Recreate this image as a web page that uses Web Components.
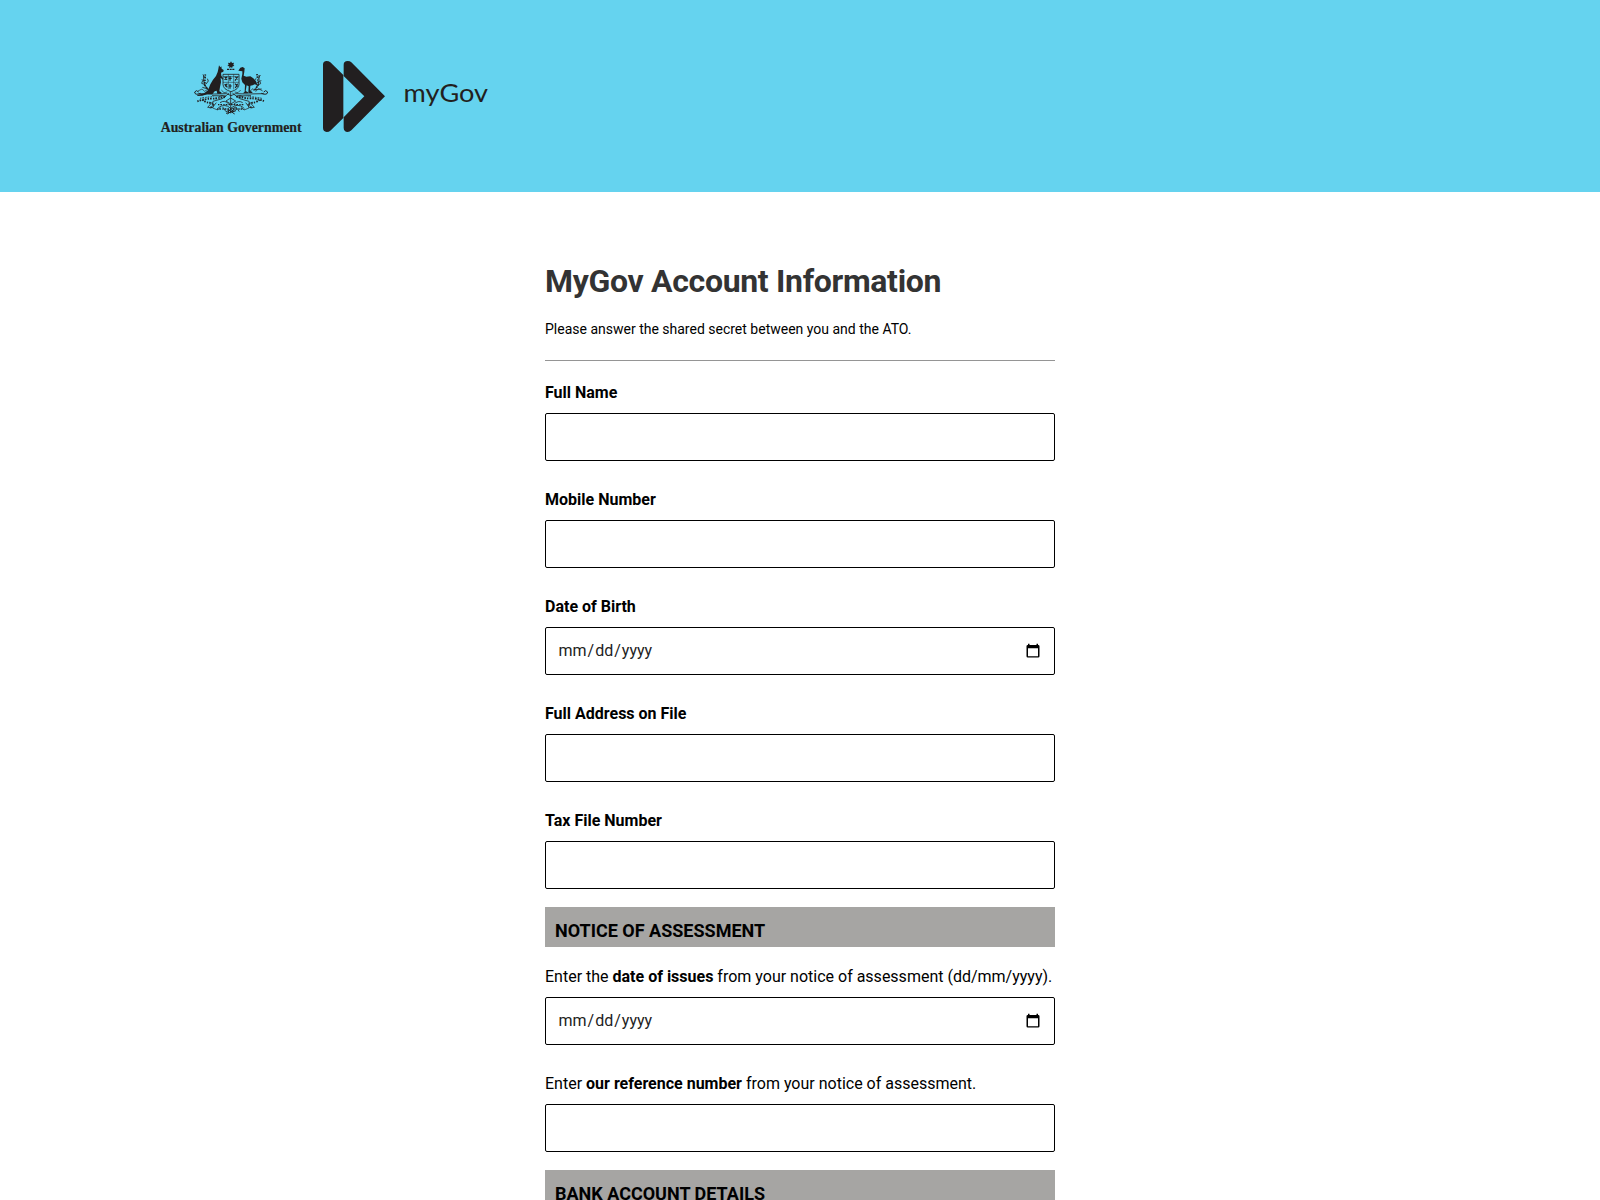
<!DOCTYPE html>
<html lang="en">
<head>
<meta charset="utf-8">
<title>MyGov Account Information</title>
<style>
html, body { margin: 0; height: 1200px; overflow: hidden; background: #fff; }
body { font-family: Roboto, sans-serif; color: #000; }
</style>
</head>
<body>
<page-shell>
  <brand-header slot="header"></brand-header>
  <page-intro><span>MyGov Account Information</span><span slot="note">Please answer the shared secret between you and the ATO.</span></page-intro>
  <field-group>
    <field-box><b>Full Name</b></field-box>
    <field-box><b>Mobile Number</b></field-box>
    <field-box kind="date"><b>Date of Birth</b></field-box>
    <field-box><b>Full Address on File</b></field-box>
    <field-box><b>Tax File Number</b></field-box>
  </field-group>
  <section-band>NOTICE OF ASSESSMENT</section-band>
  <field-group class="after">
    <field-box kind="date">Enter the <b>date of issues</b> from your notice of assessment (dd/mm/yyyy).</field-box>
    <field-box>Enter <b>our reference number</b> from your notice of assessment.</field-box>
  </field-group>
  <section-band>BANK ACCOUNT DETAILS</section-band>
</page-shell>
<script>
const define = (name, html, setup) => customElements.define(name, class extends HTMLElement {
  constructor() {
    super();
    const t = document.createElement('template');
    t.innerHTML = html;
    this.attachShadow({ mode: 'open' }).append(t.content.cloneNode(true));
  }
  connectedCallback() { if (setup) setup(this); }
});

define('page-shell', `<style>
:host{display:block;height:1200px;overflow:hidden}
main{width:510px;margin:0 auto;padding-top:71px;display:flex;flex-direction:column}
</style><slot name="header"></slot><main><slot></slot></main>`);

define('coat-of-arms', `<style>:host{display:block;width:170px;height:95px}svg{display:block}</style>
<svg width="170" height="95" viewBox="0 0 510 285" fill="#221f20">
 <path d="M243 34l3 5 6-1-2 6 3 4-5 1-2 6-3-4-5 4v-6l-6-1 4-4-2-6 6 1z"/>
 <path d="M231 58h24" stroke="#221f20" stroke-width="3.500" stroke-dasharray="6 2"/>
 <path d="M207 46l4 6 3-3 1 7 6 4-1 5-7 3 1 9 6 9-2 3-6-6 1 14-3 14-2 13 6 3v4h-12l-2-9-6 2-7 9h-15l-15 4-15 1v-3l20-5 12-9 7-18 8-14 9-11 5-12 2-9z"/>
 <path d="M265 62l6-9 7-2 6 4-1 10-2 12 8 3 12-1 9 6 8 9 4 12-8-3-6 3-7 1-1 15 7 4v3h-12l1-20-6-3-3 17 7 4v3h-15l5-5 1-20-8-8-3-11 3-14v-8z"/>
 <g fill="none" stroke="#221f20" stroke-width="2">
  <path d="M219 73h48v30q0 15-24 22-24-7-24-22z" stroke-width="2.500"/>
  <path d="M235 73v45M251 73v45M219 97h48M219 80h48" stroke-width="1.500"/>
  <path d="M224 80l7 10m0-10l-7 10M240 78v14m-4-7h9M256 80l7 8m0-8l-8 12M224 102l8 10m0-11l-7 8M240 102v14m-3-8h8M255 101l8 9m0-9l-7 13" stroke-width="3.500"/>
  <path d="M152 130q-18 7-18-4 5-8 12 0M334 130q18 7 19-4-6-8-12 0" stroke-width="3"/>
  <path d="M146 131l48 1 36-1 13 6 14-6 36 1 48-1M186 137l41 1M260 138l43-1" stroke-width="2.500"/>
  <path d="M177 119q-19-10-16-42M167 105l-12-5 3-8M164 93l-9-4M163 83l-4-10M168 102l7-9-3-7M174 117l-17-5M310 121q20-9 17-46M320 106l12-5-2-6M325 95l9-3M325 86l6-11M321 101l-8-8 5-8M315 119l20-2" stroke-width="2.500"/>
  <path d="M144 123l12-6 8 7 9-6M300 123l9-7 8 8 9-8 12 7M214 120l8 8 10-2M272 120l-8 8-10-2"/>
  <path d="M242 126v64M238 129l-21 17-28 8-16 18 14 1 12-15M247 129l22 17 28 8 16 18-14 1-12-15M242 144l-14 9 14 9 15-9zM210 158q15-10 27 5M250 164q15-15 28-6M205 173q20-14 37 2 20-17 39-2M218 171l10 14 30-14 10 14" stroke-width="2.400"/>
  <path d="M205 141l11-5 12 4M258 140l12-4 11 5M192 162l-4 12 15 6 8-8M293 162l4 12-15 6-8-8"/>
  <path d="M232 192l22-15M254 192l-22-15M228 190l30-8" stroke-width="3"/>
 </g>
 <g fill="none" stroke="#221f20" stroke-width="5.500" stroke-dasharray="4 3 5 4">
  <path d="M142 154q25-9 51-8l33-5M342 153q-24-9-50-8l-34-5"/>
  <path d="M150 145q20-4 40-5M335 145q-20-4-40-5" stroke-width="3"/>
  <path d="M157 149l12 8 22 3-10 16M329 149l-12 8-22 3 10 16"/>
  <path d="M204 164h76M201 177h82M233 184h20" stroke-width="4"/>
  <path d="M166 73l-2 32 10 14M321 72l4 32-10 15" stroke-width="5"/>
 </g>
 <text x="32" y="246" stroke="#221f20" stroke-width=".6" font-family="Liberation Serif, serif" font-weight="700" font-size="44" textLength="423" lengthAdjust="spacingAndGlyphs">Australian Government</text>
</svg>`);

define('double-arrow', `<style>:host{display:block;width:70px;height:95px}svg{display:block}</style>
<svg width="70" height="95" viewBox="30 0 210 285" fill="#221f20">
 <path d="M39 44Q39 33 50 33Q56 33 61 37L100 75V204L61 242Q57 246 50 246Q39 244 39 233Z"/>
 <path fill-rule="evenodd" d="M101 44Q101 33 113 33Q120 33 124 37L225 139L124 241Q119 246 113 246Q101 245 101 233ZM101 78V202L163 139Z"/>
</svg>`);

define('word-mark', `<style>:host{display:block;width:100px;height:95px}svg{display:block}</style>
<svg width="100" height="95" viewBox="0 0 100 95"><text x="13.600" y="51.600" fill="#221f20" font-family="Lato, sans-serif" font-size="25" textLength="84.500" lengthAdjust="spacingAndGlyphs">myGov</text></svg>`);

define('brand-header', `<style>
:host{display:flex;box-sizing:border-box;height:192px;padding:50px 0 0 150px;background:#65d3ef}
</style><coat-of-arms></coat-of-arms><double-arrow></double-arrow><word-mark></word-mark>`);

define('page-intro', `<style>
:host{display:block;margin-bottom:20px}
h1{margin:0;font-size:32px;line-height:36px;font-weight:700;letter-spacing:-.32px;color:#333;white-space:nowrap}
p{margin:20px 0 0;font-size:14px;line-height:20px}
hr{margin:21px 0 0;border:0;height:1px;background:#959595}
</style><h1><slot></slot></h1><p><slot name="note"></slot></p><hr>`);

define('field-group', `<style>
:host{display:flex;flex-direction:column;gap:27px;margin-bottom:18px}
:host(.after){margin-top:18px}
</style><slot></slot>`);

define('field-box', `<style>
:host{display:flex;flex-direction:column;gap:8px}
.label{font-size:16px;line-height:24px;white-space:nowrap}
.box{box-sizing:border-box;height:48px;border:1px solid #000;border-radius:2px;padding:0 14px 2px 12px;display:flex;align-items:center;justify-content:space-between;font-size:16px;color:#222}
.date{display:none}
:host([kind=date]) .date{display:flex}
.date span{padding:0 .5px}
svg.date{display:none;width:14px;height:15px}
:host([kind=date]) svg.date{display:block}
</style><div class="label"><slot></slot></div><div class="box"></div>`, el => {
  if (el.getAttribute('kind') === 'date')
    el.shadowRoot.querySelector('.box').innerHTML = `<div class="date"><span>mm</span><span>/</span><span>dd</span><span>/</span><span>yyyy</span></div><svg class="date" viewBox="0 0 14 15"><path fill="#000" fill-rule="evenodd" d="M2 .8h1.500V2h7V.8H12V2h.2q1.300 0 1.300 1.300v10q0 1.300-1.300 1.300H1.800Q.5 14.600.5 13.300V3.300Q.5 2 1.800 2H2zM2 5.300v7.900h10V5.300z"/></svg>`;
});

define('section-band', `<style>
:host{display:block;box-sizing:border-box;height:40px;flex:none;padding:12px 10px 4px;background:#a6a5a3;font-size:18px;line-height:24px;font-weight:700}
</style><slot></slot>`);
</script>
</body>
</html>
